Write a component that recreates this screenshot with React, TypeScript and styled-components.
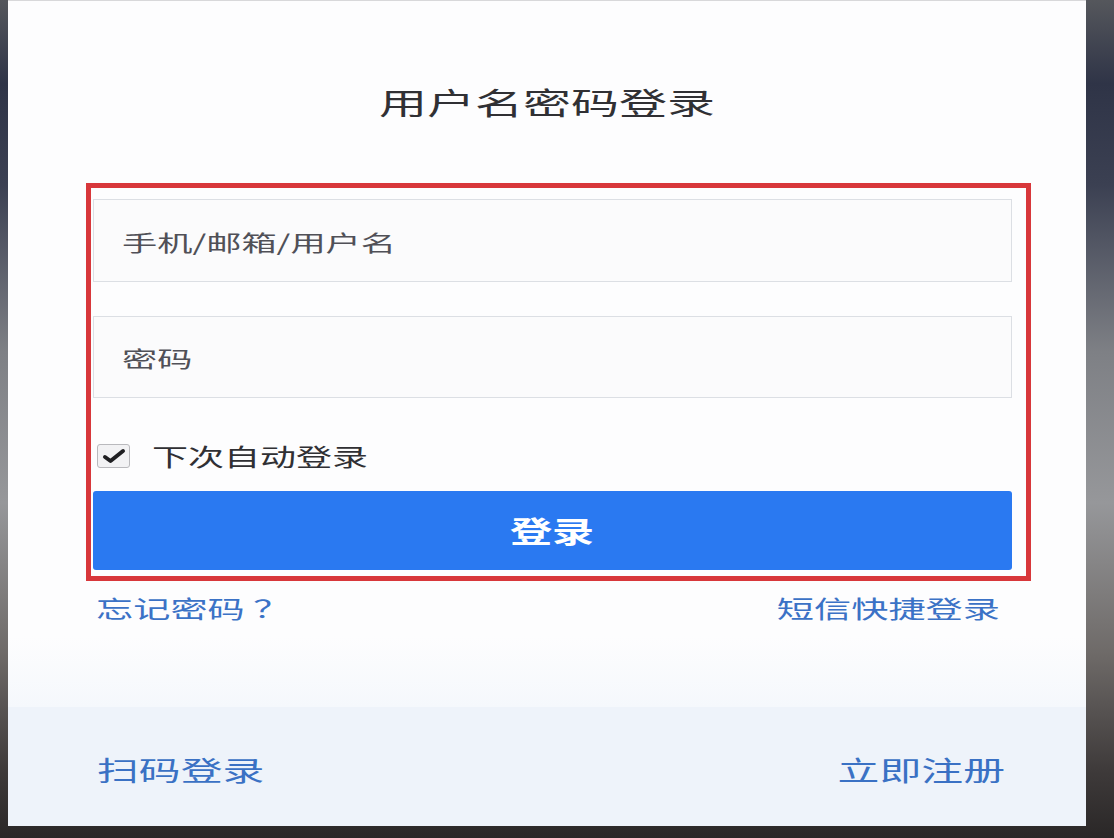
import React, { useState } from 'react';
import styled, { createGlobalStyle, css } from 'styled-components';

const GlobalStyle = createGlobalStyle`
  html, body {
    margin: 0;
    padding: 0;
    height: 100%;
  }
  body {
    font-family: "Noto Sans CJK SC", "Noto Sans", sans-serif;
    background: linear-gradient(
      180deg,
      #55575c 0%,
      #2f3447 10%,
      #3b4052 22%,
      #7e8085 42%,
      #96979a 60%,
      #6e6a68 78%,
      #3e3a3a 92%,
      #2a2727 100%
    );
  }
`;

// the screenshot is squeezed vertically, so glyphs look wide
const stretched = css<{ $origin?: string; $sx?: number }>`
  display: inline-block;
  line-height: 1;
  white-space: nowrap;
  transform: scaleX(${(p) => p.$sx ?? 1.55});
  transform-origin: ${(p) => p.$origin ?? 'left'} center;
`;

const Page = styled.div`
  display: flex;
  height: 838px;
  padding-left: 8px;
  box-sizing: border-box;
`;

const Card = styled.div`
  width: 1078px;
  height: 826px;
  background: #fdfdfe;
  display: flex;
  flex-direction: column;
  border-top: 1px solid #d8d8da;
  box-sizing: border-box;
`;

const Main = styled.div`
  height: 706px;
  display: flex;
  flex-direction: column;
  background: linear-gradient(180deg, #fdfdfe 0%, #fdfdfe 90%, #f5f8fc 100%);
`;

const TitleRow = styled.div`
  display: flex;
  justify-content: center;
  margin-top: 85px;
  height: 30px;
`;

const Title = styled.h1`
  ${stretched};
  margin: 0;
  font-size: 30px;
  font-weight: 400;
  color: #303034;
`;

const Highlight = styled.div`
  margin: 67px 0 0 78px;
  width: 945px;
  box-sizing: border-box;
  border: 5px solid #d8373b;
  padding: 11px 14px 6px 2px;
  display: flex;
  flex-direction: column;
`;

const Field = styled.label<{ $h: number; $gap?: number }>`
  display: flex;
  align-items: center;
  height: ${(p) => p.$h}px;
  margin-top: ${(p) => p.$gap ?? 0}px;
  box-sizing: border-box;
  border: 1px solid #dcdfe4;
  background: #fbfbfc;
  padding-left: 28px;
  cursor: text;
`;

const Placeholder = styled.span`
  ${stretched};
  font-size: 22px;
  color: #505057;
`;

const RememberRow = styled.label`
  display: flex;
  align-items: center;
  gap: 22px;
  height: 24px;
  margin: 46px 0 23px 4px;
  cursor: pointer;
`;

const CheckBox = styled.span<{ $on: boolean }>`
  width: 33px;
  height: 24px;
  box-sizing: border-box;
  border: 1px solid #b9b9bd;
  border-radius: 3px;
  background: #f2f2f4;
  display: flex;
  align-items: center;
  padding-left: 4px;
  svg {
    visibility: ${(p) => (p.$on ? 'visible' : 'hidden')};
  }
`;

const RememberText = styled.span`
  ${stretched};
  font-size: 24px;
  color: #303034;
`;

const LoginButton = styled.button`
  height: 79px;
  border: 0;
  border-radius: 3px;
  background: #2a79f1;
  display: flex;
  align-items: center;
  justify-content: center;
  cursor: pointer;
  padding: 0;
`;

const LoginLabel = styled.span`
  ${stretched};
  font-family: "Noto Sans CJK SC", sans-serif;
  font-size: 29px;
  font-weight: 700;
  color: #ffffff;
`;

const LinkRow = styled.div`
  display: flex;
  justify-content: space-between;
  align-items: flex-start;
  margin-top: 15px;
  padding: 0 86px 0 88px;
`;

const Link = styled.a`
  ${stretched};
  font-size: 24px;
  color: #3b72c6;
  text-decoration: none;
  cursor: pointer;
`;

const Footer = styled.div`
  flex: 1;
  display: flex;
  align-items: center;
  justify-content: space-between;
  padding: 5px 81px 0 89px;
  background: #eef3fa;
`;

const FooterLink = styled.a`
  ${stretched};
  font-size: 27px;
  color: #3a71c4;
  text-decoration: none;
  cursor: pointer;
`;

export default function App() {
  const [remember, setRemember] = useState(true);

  return (
    <>
      <GlobalStyle />
      <Page>
        <Card>
          <Main>
            <TitleRow>
              <Title $origin='center' $sx={1.6}>
                用户名密码登录
              </Title>
            </TitleRow>
            <Highlight>
              <Field $h={83}>
                <Placeholder $sx={1.6}>手机/邮箱/用户名</Placeholder>
              </Field>
              <Field $h={82} $gap={34}>
                <Placeholder $sx={1.6}>密码</Placeholder>
              </Field>
              <RememberRow onClick={() => setRemember(!remember)}>
                <CheckBox $on={remember}>
                  <svg width='24' height='16' viewBox='0 0 24 16'>
                    <path
                      d='M3 9 L8.5 13 L21 3'
                      fill='none'
                      stroke='#1f1f22'
                      strokeWidth='4'
                      strokeLinecap='round'
                      strokeLinejoin='round'
                    />
                  </svg>
                </CheckBox>
                <RememberText $sx={1.5}>下次自动登录</RememberText>
              </RememberRow>
              <LoginButton>
                <LoginLabel $origin='center' $sx={1.45}>
                  登录
                </LoginLabel>
              </LoginButton>
            </Highlight>
            <LinkRow>
              <Link>忘记密码 ？</Link>
              <Link $origin='right'>短信快捷登录</Link>
            </LinkRow>
          </Main>
          <Footer>
            <FooterLink>扫码登录</FooterLink>
            <FooterLink $origin='right'>立即注册</FooterLink>
          </Footer>
        </Card>
      </Page>
    </>
  );
}
